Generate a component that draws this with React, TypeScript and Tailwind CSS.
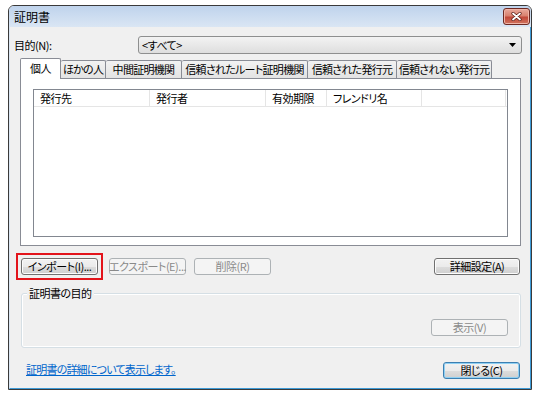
import React from "react";

type BtnProps = {
  label: string;
  w?: string;
  disabled?: boolean;
  isDefault?: boolean;
};

function Button({ label, w = "w-[77px]", disabled, isDefault }: BtnProps) {
  if (disabled) {
    return (
      <div
        className={`${w} h-[17px] flex items-center justify-center rounded-[3px] border border-[#adb2b5] bg-[#f4f4f4] leading-none whitespace-nowrap text-[#8a8a8a]`}
      >
        {label}
      </div>
    );
  }
  return (
    <div
      className={`${w} h-[17px] flex items-center justify-center rounded-[3px] border leading-none whitespace-nowrap text-black bg-[linear-gradient(to_bottom,#f2f2f2_0%,#ebebeb_50%,#dddddd_51%,#cfcfcf_100%)] ${
        isDefault
          ? "border-[#3c7fb1] shadow-[inset_0_0_0_1px_#8fd0f3]"
          : "border-[#707070] shadow-[inset_0_0_0_1px_#fcfcfc]"
      }`}
    >
      {label}
    </div>
  );
}

const tabs = [
  { label: "ほかの人", w: "w-[45px]" },
  { label: "中間証明機関", w: "w-[76px]" },
  { label: "信頼されたルート証明機関", w: "w-[126px]" },
  { label: "信頼された発行元", w: "w-[89px]" },
  { label: "信頼されない発行元", w: "w-[95px]" },
];

const columns = [
  { label: "発行先", w: "w-[116px]" },
  { label: "発行者", w: "w-[116px]" },
  { label: "有効期限", w: "w-[61px]" },
  { label: "フレンドリ名", w: "w-[95px]" },
];

export default function App() {
  return (
    <div className="w-[540px] h-[396px] bg-white pt-[5px] pl-[8px] overflow-hidden font-['Noto_Sans_CJK_JP','Liberation_Sans',sans-serif] [font-feature-settings:'palt'] text-[11px] tracking-[-0.5px] text-black">
      {/* window */}
      <div className="w-[524px] h-[385px] flex flex-col border border-[#3a3a3a] rounded-t-[6px] overflow-hidden">
        {/* title bar */}
        <div className="h-[21px] flex justify-between pl-[5px] pr-[1px] bg-gradient-to-b from-[#bfd3ec] to-[#dae6f4]">
          <span className="self-center text-[12px] tracking-normal leading-none">証明書</span>
          <div className="mt-[2px] w-[27px] h-[17px] rounded-[3px] border border-[#6d2a23] flex items-center justify-center bg-[linear-gradient(to_bottom,#e9a99c_0%,#d9826f_45%,#c2493a_55%,#d0745e_100%)] shadow-[inset_0_0_0_1px_#f0b5a8]">
            <svg width="11" height="9" viewBox="0 0 11 9">
              <path d="M2 1.5 L9 7.5 M9 1.5 L2 7.5" stroke="#5a1d16" strokeWidth="3.2" strokeLinecap="round" />
              <path d="M2 1.5 L9 7.5 M9 1.5 L2 7.5" stroke="#ffffff" strokeWidth="1.8" strokeLinecap="round" />
            </svg>
          </div>
        </div>

        {/* client area */}
        <div className="flex-1 flex flex-col bg-[#f0f0f0] border-r border-b border-[#3d9ad6] border-l-[1px] border-l-[#dbe6f2]">
          {/* purpose row */}
          <div className="mt-[9px] h-[18px] flex items-center">
            <span className="pl-[4px] w-[128px] leading-none">目的(N):</span>
            <div className="w-[384px] h-[18px] flex items-center justify-between rounded-[3px] border border-[#8e8f8f] bg-gradient-to-b from-[#f3f3f3] to-[#dedede] pl-[3px] pr-[5px]">
              <span className="leading-none">&lt;すべて&gt;</span>
              <svg width="7" height="4" viewBox="0 0 7 4">
                <path d="M0 0 H7 L3.5 4 Z" fill="#000" />
              </svg>
            </div>
          </div>

          {/* tabs */}
          <div className="mt-[4px] ml-[10px] h-[20px] flex items-end">
            <div className="relative z-10 w-[41px] h-[21px] -mb-px flex items-center justify-center border border-b-0 border-[#898c95] bg-white rounded-t-[2px] pb-[2px] whitespace-nowrap leading-none">
              個人
            </div>
            {tabs.map((t) => (
              <div
                key={t.label}
                className={`${t.w} h-[18px] flex items-center justify-center border border-l-0 border-b-0 border-[#898c95] bg-gradient-to-b from-[#f2f2f2] to-[#e3e3e3] rounded-t-[2px] whitespace-nowrap leading-none tracking-[-0.7px]`}
              >
                {t.label}
              </div>
            ))}
          </div>

          {/* tab panel */}
          <div className="ml-[10px] w-[501px] h-[168px] border border-[#898c95] bg-white pt-[10px] pl-[12px]">
            <div className="w-[475px] h-[148px] border border-[#828790] bg-white">
              <div className="h-[17px] flex border-b border-[#e5e5e5]">
                {columns.map((c) => (
                  <div
                    key={c.label}
                    className={`${c.w} h-full flex items-center pl-[6px] border-r border-[#e5e5e5] leading-none whitespace-nowrap`}
                  >
                    {c.label}
                  </div>
                ))}
                <div className="w-[84px] h-full border-r border-[#e5e5e5]" />
              </div>
            </div>
          </div>

          {/* buttons row */}
          <div className="mt-[7px] flex items-center pl-[6px] pr-[10px]">
            <div className="border-2 border-[#e3141b] p-[3px]">
              <Button label="インポート(I)..." />
            </div>
            <div className="ml-[6px]">
              <Button label="エクスポート(E)..." disabled />
            </div>
            <div className="ml-[8px]">
              <Button label="削除(R)" disabled />
            </div>
            <div className="ml-auto">
              <Button label="詳細設定(A)" w="w-[86px]" />
            </div>
          </div>

          {/* group box */}
          <div className="mt-[13px] ml-[11px] w-[500px] h-[55px] relative rounded-[3px] border border-[#d5dfe5] shadow-[inset_0_0_0_1px_#ffffff] flex justify-end items-start pt-[25px] pr-[12px]">
            <span className="absolute left-[5px] -top-[9px] px-[2px] bg-[#f0f0f0] leading-[16px]">
              証明書の目的
            </span>
            <Button label="表示(V)" disabled />
          </div>

          {/* bottom row */}
          <div className="mt-[14px] flex items-start justify-between pl-[16px] pr-[10px]">
            <span className="text-[#0066cc] underline leading-[14px] tracking-[-0.8px] whitespace-nowrap">
              証明書の詳細について表示します。
            </span>
            <Button label="閉じる(C)" isDefault />
          </div>
        </div>
      </div>
    </div>
  );
}
